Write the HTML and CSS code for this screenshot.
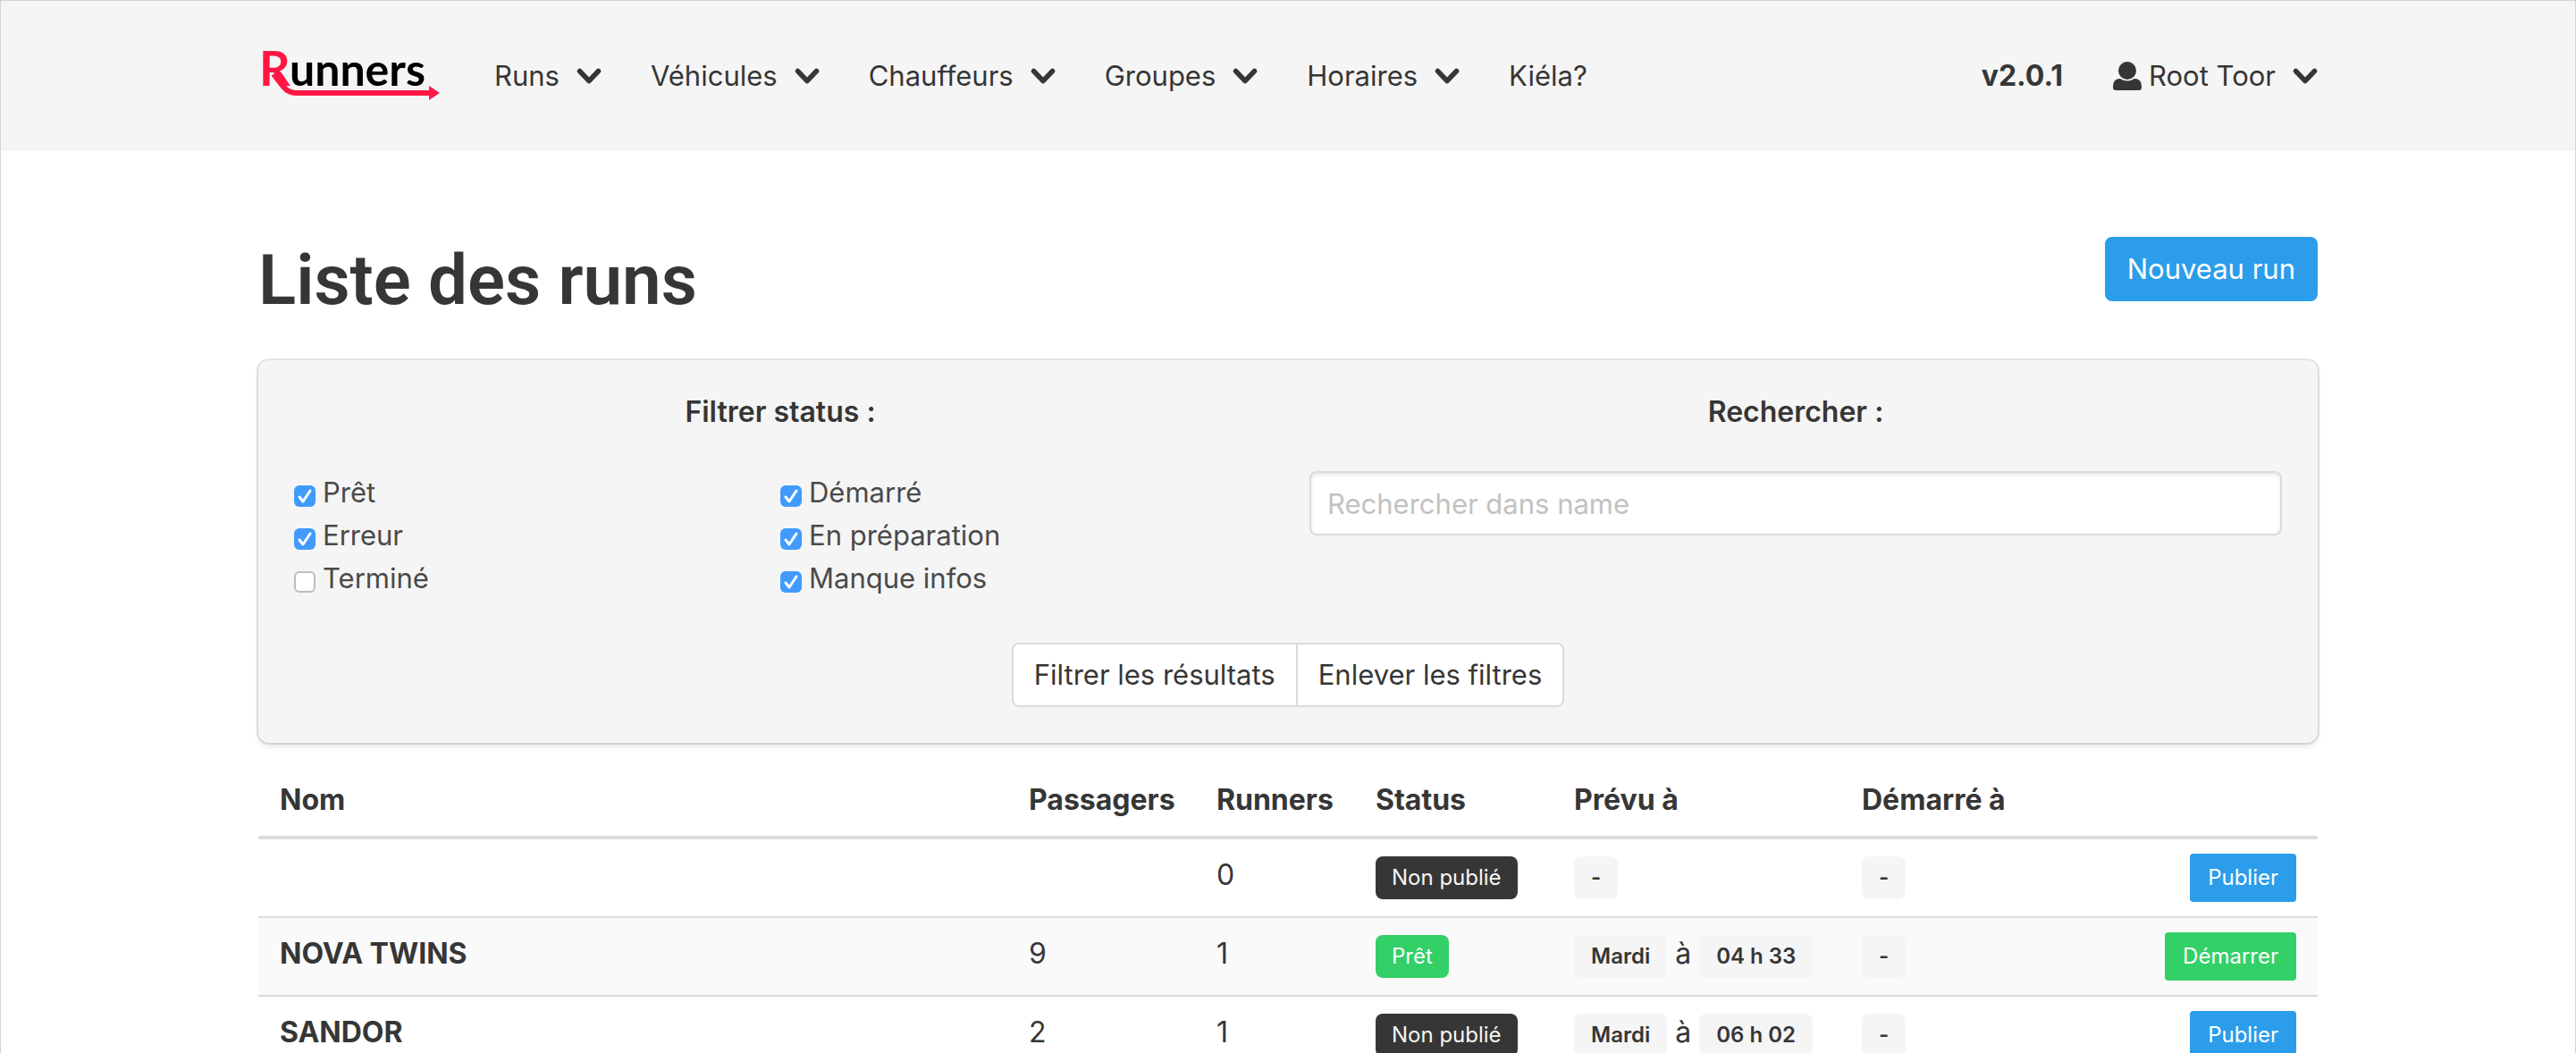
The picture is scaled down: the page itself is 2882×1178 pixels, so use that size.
FILE: index.html
```html
<!DOCTYPE html>
<html lang="fr">
<head>
<meta charset="utf-8">
<meta name="viewport" content="width=device-width, initial-scale=1">
<title>Runners - Liste des runs</title>
<link rel="stylesheet" href="styles.css">
</head>
<body>
<svg class="sprite" aria-hidden="true">
  <symbol id="chevron" viewBox="0 0 28 20"><path d="M3.500 4.500 14 15.500 24.500 4.500" fill="none" stroke="currentColor" stroke-width="5.500" stroke-linecap="round" stroke-linejoin="round"/></symbol>
</svg>
<div class="page">
  <header class="navbar">
    <nav class="container navbar-menu" aria-label="Navigation principale">
      <a class="brand" href="#" aria-label="Runners">
        <svg class="logo" viewBox="0 0 218 64" aria-hidden="true">
          <text class="logo-initial" x="1" y="43">R</text>
          <text class="logo-name" x="35" y="43">unners</text>
          <path d="M17 30 28 44Q34 51 42 51H194" fill="none" stroke="#ff1744" stroke-width="6"/>
          <path d="M191 43 203 51 191 59Z" fill="#ff1744"/>
        </svg>
      </a>
      <a class="nav-link" href="#">Runs <svg class="chevron"><use href="#chevron"/></svg></a>
      <a class="nav-link" href="#">Véhicules <svg class="chevron"><use href="#chevron"/></svg></a>
      <a class="nav-link" href="#">Chauffeurs <svg class="chevron"><use href="#chevron"/></svg></a>
      <a class="nav-link" href="#">Groupes <svg class="chevron"><use href="#chevron"/></svg></a>
      <a class="nav-link" href="#">Horaires <svg class="chevron"><use href="#chevron"/></svg></a>
      <a class="nav-link" href="#">Kiéla?</a>
      <strong class="version">v2.0.1</strong>
      <a class="nav-link user" href="#"><span class="user-name"><svg class="user-icon" viewBox="0 0 32 32" aria-hidden="true"><ellipse cx="16" cy="10" rx="10" ry="10"/><path d="M8 19Q16 24 24 19Q32 19 32 28V29Q32 32 29 32H3Q0 32 0 29V28Q0 19 8 19Z"/></svg>Root Toor</span> <svg class="chevron"><use href="#chevron"/></svg></a>
    </nav>
  </header>

  <main class="container content">
    <div class="heading">
      <h1 class="title">Liste des runs</h1>
      <button class="button is-info" type="button">Nouveau run</button>
    </div>

    <form class="box">
      <div class="columns">
        <fieldset class="column">
          <legend class="subtitle">Filtrer status :</legend>
          <div class="checks">
            <label class="check"><input type="checkbox" checked> Prêt</label>
            <label class="check"><input type="checkbox" checked> Démarré</label>
            <label class="check"><input type="checkbox" checked> Erreur</label>
            <label class="check"><input type="checkbox" checked> En préparation</label>
            <label class="check"><input type="checkbox"> Terminé</label>
            <label class="check"><input type="checkbox" checked> Manque infos</label>
          </div>
        </fieldset>
        <div class="column">
          <label class="subtitle" for="search">Rechercher :</label>
          <input class="input" id="search" type="text" placeholder="Rechercher dans name">
        </div>
      </div>
      <div class="buttons">
        <button class="button" type="button">Filtrer les résultats</button>
        <button class="button" type="reset">Enlever les filtres</button>
      </div>
    </form>

    <table class="table">
      <colgroup>
        <col><col class="col-passengers"><col class="col-runners"><col class="col-status"><col class="col-planned"><col class="col-started"><col class="col-action">
      </colgroup>
      <thead>
        <tr><th>Nom</th><th>Passagers</th><th>Runners</th><th>Status</th><th>Prévu à</th><th>Démarré à</th><th></th></tr>
      </thead>
      <tbody>
        <tr>
          <th></th><td></td><td>0</td>
          <td><span class="tag is-dark">Non publié</span></td>
          <td><span class="tag">-</span></td>
          <td><span class="tag">-</span></td>
          <td class="action"><button class="button is-small is-info" type="button">Publier</button></td>
        </tr>
        <tr>
          <th>NOVA TWINS</th><td>9</td><td>1</td>
          <td><span class="tag is-success">Prêt</span></td>
          <td><span class="tag">Mardi</span> à <span class="tag">04 h 33</span></td>
          <td><span class="tag">-</span></td>
          <td class="action"><button class="button is-small is-success" type="button">Démarrer</button></td>
        </tr>
        <tr>
          <th>SANDOR</th><td>2</td><td>1</td>
          <td><span class="tag is-dark">Non publié</span></td>
          <td><span class="tag">Mardi</span> à <span class="tag">06 h 02</span></td>
          <td><span class="tag">-</span></td>
          <td class="action"><button class="button is-small is-info" type="button">Publier</button></td>
        </tr>
      </tbody>
    </table>
  </main>
</div>
</body>
</html>
```
FILE: styles.css
```css
*, *::before, *::after { box-sizing: border-box; }

body {
  margin: 0;
  background: #fff;
  color: #363636;
  font: 31px/48px Inter, "Liberation Sans", sans-serif;
}

button, input { font: inherit; color: inherit; }

.sprite { display: none; }

.page {
  height: 100vh;
  overflow: hidden;
  border: 1px solid #d3d3d3;
  border-bottom: 0;
}

.container {
  max-width: 2304px;
  margin: 0 auto;
}

/* Navigation */
.navbar { background: #f5f5f5; }

.navbar-menu {
  display: flex;
  align-items: center;
  height: 168px;
}

.brand { display: flex; margin-right: 22px; }

.logo { width: 218px; height: 64px; overflow: visible; }

.logo-initial, .logo-name { font-family: Lato, sans-serif; font-weight: 700; }
.logo-initial { font-size: 54px; fill: #ff1744; }
.logo-name { font-size: 50px; fill: #000; }

.nav-link {
  display: flex;
  align-items: center;
  gap: 19px;
  padding: 0 31px 0 24px;
  color: inherit;
  text-decoration: none;
}

.chevron { width: 28px; height: 20px; }

.version { margin-left: auto; padding: 0 24px; font-size: 32px; }

.user { padding: 0 0 0 32px; }
.user-name { display: flex; align-items: center; gap: 8px; }
.user-icon { width: 32px; height: 32px; fill: currentColor; }

/* Heading */
.content { padding-top: 96px; }

.heading {
  display: flex;
  align-items: flex-start;
  justify-content: space-between;
  margin-bottom: 40px;
}

.title {
  margin: 0;
  font-family: Roboto, Inter, sans-serif;
  font-size: 78px;
  line-height: 98px;
  font-weight: 600;
}

/* Controls */
.button {
  height: 72px;
  padding: 0 23px;
  border: 2px solid #dbdbdb;
  border-radius: 8px;
  background: #fff;
  white-space: nowrap;
}

.button.is-small {
  height: 54px;
  padding: 0 18px;
  border-radius: 4px;
  font-size: 24px;
  line-height: 36px;
}

.button.is-info { border-color: #2b9deb; background: #2b9deb; color: #fff; }
.button.is-success { border-color: #33d068; background: #33d068; color: #fff; }

.buttons { display: flex; justify-content: center; }
.buttons .button:first-child { border-radius: 8px 0 0 8px; }
.buttons .button:last-child { margin-left: -2px; border-radius: 0 8px 8px 0; }

.input {
  display: block;
  width: 100%;
  height: 72px;
  padding: 0 18px;
  border: 2px solid #dbdbdb;
  border-radius: 8px;
  background: #fff;
  box-shadow: inset 0 2px 4px rgba(10, 10, 10, 0.1);
}

.input::placeholder { color: #c2c2c2; opacity: 1; }

/* Filters */
.box {
  margin: 0 0 24px;
  padding: 40px;
  border-radius: 12px;
  background: #f5f5f5;
  box-shadow: 0 4px 6px rgba(10, 10, 10, 0.1), 0 0 0 2px rgba(10, 10, 10, 0.1);
}

.columns {
  display: grid;
  grid-template-columns: 1fr 1fr;
  gap: 48px;
  margin-bottom: 48px;
}

.column { min-width: 0; margin: 0; padding: 0; border: 0; }

.subtitle {
  display: block;
  width: 100%;
  margin-bottom: 48px;
  padding: 0;
  font-size: 32px;
  line-height: 36px;
  font-weight: 600;
  text-align: center;
}

.checks {
  display: grid;
  grid-template-columns: 1fr 1fr;
  color: #4a4a4a;
}

.check { display: flex; align-items: center; gap: 8px; }

.check input {
  appearance: none;
  width: 24px;
  height: 24px;
  margin: 8px 0 0;
  border: 2px solid #bdbdbd;
  border-radius: 6px;
  background: #fff;
}

.check input:checked {
  border: 0;
  background: #409bfc url("data:image/svg+xml,%3Csvg xmlns='http://www.w3.org/2000/svg' viewBox='0 0 24 24'%3E%3Cpath d='M6 13l4 5 8-12' fill='none' stroke='white' stroke-width='3' stroke-linecap='round' stroke-linejoin='round'/%3E%3C/svg%3E");
}

/* Runs table */
.table {
  width: 100%;
  border-collapse: separate;
  border-spacing: 0;
  table-layout: fixed;
}

.col-passengers { width: 210px; }
.col-runners { width: 178px; }
.col-status { width: 222px; }
.col-planned { width: 322px; }
.col-started { width: 340px; }
.col-action { width: 194px; }

.table th, .table td {
  height: 88px;
  padding: 16px 24px;
  border-bottom: 2px solid #dbdbdb;
  font-size: 32px;
  text-align: left;
  vertical-align: top;
  white-space: nowrap;
}

.table thead th { height: 84px; border-bottom-width: 4px; }
.table tbody tr:nth-child(even) { background: #fafafa; }
.table .action { display: flex; justify-content: flex-end; }

.tag {
  display: inline-flex;
  align-items: center;
  height: 48px;
  padding: 0 19px;
  border-radius: 8px;
  background: #f5f5f5;
  font-size: 24px;
  line-height: 36px;
  font-weight: 600;
}

.tag.is-dark { padding: 0 18px; background: #363636; color: #f5f5f5; font-weight: 400; }
.tag.is-success { padding: 0 18px; background: #33d068; color: #fff; font-weight: 400; }
```
